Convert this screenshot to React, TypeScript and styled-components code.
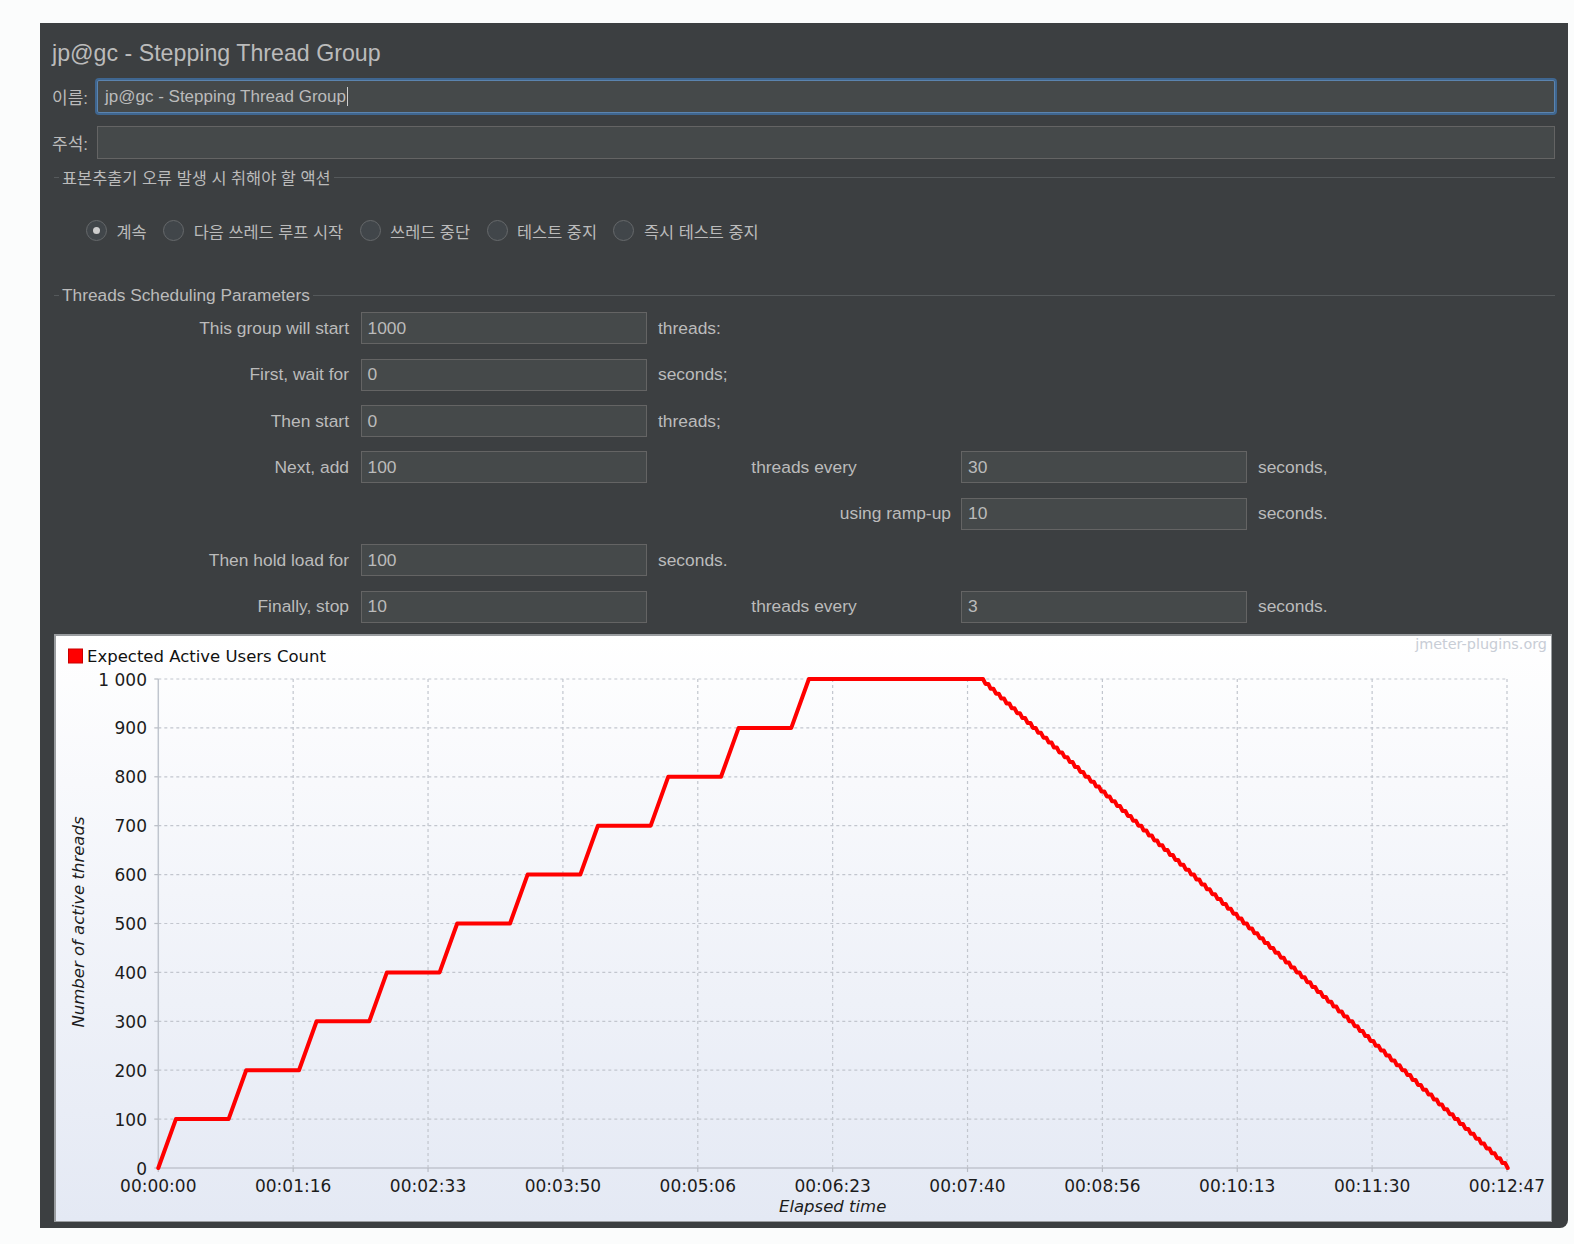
import styled, { createGlobalStyle } from 'styled-components'

const GlobalStyle = createGlobalStyle`
  body {
    margin: 0;
    background: #fbfcfc;
    font-family: "Liberation Sans", "Noto Sans CJK KR", sans-serif;
  }
`

// Chart geometry, in the chart box's own coordinates.
const CHART_W = 1496
const CHART_H = 586
const X0 = 102.3
const X1 = 1451
const Y0 = 532
const Y_TOP = 43
const T_MAX = 767

const xAt = (t: number) => X0 + (t / T_MAX) * (X1 - X0)
const yAt = (v: number) => Y0 - (v / 1000) * (Y0 - Y_TOP)

const X_LABELS = [
  '00:00:00',
  '00:01:16',
  '00:02:33',
  '00:03:50',
  '00:05:06',
  '00:06:23',
  '00:07:40',
  '00:08:56',
  '00:10:13',
  '00:11:30',
  '00:12:47',
]

// Expected active users: 10 steps of 100 (10s ramp, 30s hold), hold, then 10 down every 3s.
const buildCurve = (): string => {
  const pts: Array<[number, number]> = [[0, 0]]
  for (let i = 0; i < 10; i++) {
    pts.push([40 * i + 10, 100 * (i + 1)])
    if (i < 9) pts.push([40 * (i + 1), 100 * (i + 1)])
  }
  for (let k = 0; k < 100; k++) {
    const t = 469 + 3 * k
    const v = 1000 - 10 * k
    pts.push([t, v])
    pts.push([t + 1.4, v - 10])
  }
  return pts
    .map(([t, v], i) => `${i === 0 ? 'M' : 'L'}${xAt(t).toFixed(1)},${yAt(v).toFixed(1)}`)
    .join(' ')
}

type RowSpec = {
  label?: string
  value?: string
  middle?: string
  middleAlign?: 'start' | 'center' | 'end'
  value2?: string
  suffix?: string
}

const ROWS: RowSpec[] = [
  { label: 'This group will start', value: '1000', middle: 'threads:' },
  { label: 'First, wait for', value: '0', middle: 'seconds;' },
  { label: 'Then start', value: '0', middle: 'threads;' },
  { label: 'Next, add', value: '100', middle: 'threads every', middleAlign: 'center', value2: '30', suffix: 'seconds,' },
  { middle: 'using ramp-up', middleAlign: 'end', value2: '10', suffix: 'seconds.' },
  { label: 'Then hold load for', value: '100', middle: 'seconds.' },
  { label: 'Finally, stop', value: '10', middle: 'threads every', middleAlign: 'center', value2: '3', suffix: 'seconds.' },
]

const RADIOS = ['계속', '다음 쓰레드 루프 시작', '쓰레드 중단', '테스트 중지', '즉시 테스트 중지']

const StepChart = () => {
  const gridYs = Array.from({ length: 11 }, (_, i) => i * 100)
  const gridXs = X_LABELS.map((_, i) => X0 + (i * (X1 - X0)) / 10)

  return (
    <svg width={CHART_W} height={CHART_H} viewBox={`0 0 ${CHART_W} ${CHART_H}`}>
      <rect x={12.5} y={13} width={14} height={14} fill="#ff0000" stroke="#c80000" strokeWidth={1} />
      <text x={31} y={26} fontFamily="DejaVu Sans" fontSize={16.5} fill="#111">
        Expected Active Users Count
      </text>
      <text x={1491} y={13} textAnchor="end" fontFamily="DejaVu Sans" fontSize={14.4} fill="#c8cdd6">
        jmeter-plugins.org
      </text>

      {gridYs.slice(1).map((v) => (
        <line key={`h${v}`} x1={X0} x2={X1} y1={yAt(v)} y2={yAt(v)} stroke="#c2c6ce" strokeWidth={1.2} strokeDasharray="3 3" />
      ))}
      {gridXs.slice(1).map((x) => (
        <line key={`v${x}`} x1={x} x2={x} y1={Y_TOP} y2={Y0} stroke="#c2c6ce" strokeWidth={1.2} strokeDasharray="3 3" />
      ))}

      <line x1={X0} x2={X0} y1={Y_TOP} y2={Y0} stroke="#c0c5ce" strokeWidth={1.5} />
      <line x1={X0} x2={X1} y1={Y0} y2={Y0} stroke="#c0c5ce" strokeWidth={1.5} />

      {gridYs.map((v) => (
        <g key={`yl${v}`}>
          <line x1={X0 - 4} x2={X0} y1={yAt(v)} y2={yAt(v)} stroke="#b8bcc4" strokeWidth={1.2} />
          <text x={91} y={yAt(v) + 6.5} textAnchor="end" fontFamily="DejaVu Sans" fontSize={17} fill="#1c1c1c">
            {v === 1000 ? '1 000' : v}
          </text>
        </g>
      ))}
      {gridXs.map((x, i) => (
        <g key={`xl${i}`}>
          <line x1={x} x2={x} y1={Y0} y2={Y0 + 4} stroke="#b8bcc4" strokeWidth={1.2} />
          <text x={x} y={556} textAnchor="middle" fontFamily="DejaVu Sans" fontSize={17} fill="#1c1c1c">
            {X_LABELS[i]}
          </text>
        </g>
      ))}

      <text
        x={(X0 + X1) / 2}
        y={576}
        textAnchor="middle"
        fontFamily="DejaVu Sans"
        fontStyle="italic"
        fontSize={16.5}
        fill="#1c1c1c"
      >
        Elapsed time
      </text>
      <text
        transform="translate(27.5 286) rotate(-90)"
        textAnchor="middle"
        fontFamily="DejaVu Sans"
        fontStyle="italic"
        fontSize={16.5}
        fill="#1c1c1c"
      >
        Number of active threads
      </text>

      <path d={buildCurve()} fill="none" stroke="#ff0000" strokeWidth={4} strokeLinejoin="round" strokeLinecap="round" />
    </svg>
  )
}

const SectionHeader = ({ title, size }: { title: string; size: number }) => (
  <Header>
    <Stub />
    <HeaderText $size={size}>{title}</HeaderText>
    <Rule />
  </Header>
)

export default function App() {
  return (
    <>
      <GlobalStyle />
      <Panel>
        <Title>jp@gc - Stepping Thread Group</Title>

        <FieldRow>
          <FieldLabel>이름:</FieldLabel>
          <TextBox $focused>
            jp@gc - Stepping Thread Group
            <Caret />
          </TextBox>
        </FieldRow>
        <FieldRow>
          <FieldLabel>주석:</FieldLabel>
          <TextBox />
        </FieldRow>

        <SectionHeader title="표본추출기 오류 발생 시 취해야 할 액션" size={16.4} />
        <RadioGroup>
          {RADIOS.map((label, i) => (
            <RadioItem key={label}>
              <RadioCircle $checked={i === 0} />
              <RadioLabel>{label}</RadioLabel>
            </RadioItem>
          ))}
        </RadioGroup>

        <SectionHeader title="Threads Scheduling Parameters" size={17.3} />
        <ParamsGrid>
          {ROWS.map((row, i) => (
            <ParamRow key={i}>
              <ParamLabel>{row.label ?? ''}</ParamLabel>
              {row.value !== undefined ? <ParamInput>{row.value}</ParamInput> : <span />}
              <MiddleCell $align={row.middleAlign ?? 'start'}>{row.middle ?? ''}</MiddleCell>
              {row.value2 !== undefined ? <ParamInput>{row.value2}</ParamInput> : <span />}
              <SuffixCell>{row.suffix ?? ''}</SuffixCell>
            </ParamRow>
          ))}
        </ParamsGrid>

        <ChartBox>
          <StepChart />
        </ChartBox>
      </Panel>
    </>
  )
}

const Panel = styled.div`
  box-sizing: border-box;
  width: 1528px;
  margin: 23px 0 0 40px;
  padding: 16px 13px 6px 12px;
  display: flex;
  flex-direction: column;
  background: #3c3f41;
  border-bottom-right-radius: 8px;
  color: #bbbbbb;
`

const Title = styled.div`
  font-size: 23.2px;
  line-height: 28px;
  margin-bottom: 13px;
`

const FieldRow = styled.div`
  display: flex;
  align-items: center;
  height: 33px;

  & + & {
    margin-top: 13px;
  }
`

const FieldLabel = styled.span`
  width: 45px;
  font-size: 17px;
  flex: none;
`

const TextBox = styled.div<{ $focused?: boolean }>`
  box-sizing: border-box;
  flex: 1;
  height: 33px;
  display: flex;
  align-items: center;
  padding-left: 7px;
  background: #45494a;
  border: 1px solid ${(p) => (p.$focused ? '#5b84af' : '#646464')};
  border-radius: ${(p) => (p.$focused ? '2px' : '0')};
  box-shadow: ${(p) => (p.$focused ? '0 0 0 2px #3f6690' : 'none')};
  font-size: 17px;
  color: #bbbbbb;
  white-space: pre;
`

const Caret = styled.span`
  display: inline-block;
  width: 1px;
  height: 19px;
  margin-left: 1px;
  background: #cfcfcf;
`

const Header = styled.div`
  display: flex;
  align-items: center;
  gap: 3px;
  height: 20px;
  margin: 8px 0 0 2px;

  & ~ & {
    margin-top: 44px;
  }
`

const Stub = styled.span`
  width: 5px;
  height: 1px;
  background: #55595b;
`

const Rule = styled.span`
  flex: 1;
  height: 1px;
  background: #55595b;
`

const HeaderText = styled.span<{ $size: number }>`
  font-size: ${(p) => p.$size}px;
  white-space: nowrap;
`

const RadioGroup = styled.div`
  display: flex;
  align-items: center;
  gap: 16.5px;
  height: 21px;
  margin: 33px 0 0 34px;
`

const RadioItem = styled.div`
  display: flex;
  align-items: center;
  gap: 9.5px;
`

const RadioCircle = styled.span<{ $checked: boolean }>`
  box-sizing: border-box;
  width: 21px;
  height: 21px;
  border-radius: 50%;
  border: 1px solid #66696b;
  background: #41464a;
  display: flex;
  align-items: center;
  justify-content: center;

  &::after {
    content: '';
    width: 7px;
    height: 7px;
    border-radius: 50%;
    background: #cdcdcd;
    display: ${(p) => (p.$checked ? 'block' : 'none')};
  }
`

const RadioLabel = styled.span`
  font-size: 16.4px;
  white-space: nowrap;
`

const ParamsGrid = styled.div`
  display: flex;
  flex-direction: column;
  gap: 14.4px;
  margin-top: 7.3px;
`

const ParamRow = styled.div`
  display: grid;
  grid-template-columns: 308.5px 286.5px 314px 286px 1fr;
  height: 32px;
  align-items: center;
  font-size: 17.4px;
`

const ParamLabel = styled.span`
  text-align: right;
  padding-right: 11.5px;
`

const ParamInput = styled.div`
  box-sizing: border-box;
  height: 32px;
  display: flex;
  align-items: center;
  padding-left: 6px;
  background: #45494a;
  border: 1px solid #646464;
  color: #bbbbbb;
`

const MiddleCell = styled.span<{ $align: 'start' | 'center' | 'end' }>`
  text-align: ${(p) => (p.$align === 'start' ? 'left' : p.$align === 'center' ? 'center' : 'right')};
  padding: ${(p) => (p.$align === 'start' ? '0 0 0 11px' : p.$align === 'end' ? '0 10px 0 0' : '0')};
`

const SuffixCell = styled.span`
  padding-left: 11px;
`

const ChartBox = styled.div`
  box-sizing: border-box;
  width: 1498px;
  height: 588px;
  margin: 11px 0 0 2px;
  border: 1px solid #9a9da0;
  border-top-width: 2px;
  border-left-width: 2px;
  background: linear-gradient(180deg, #ffffff 0%, #f8f9fc 25%, #e4e9f4 100%);

  svg {
    display: block;
  }
`
